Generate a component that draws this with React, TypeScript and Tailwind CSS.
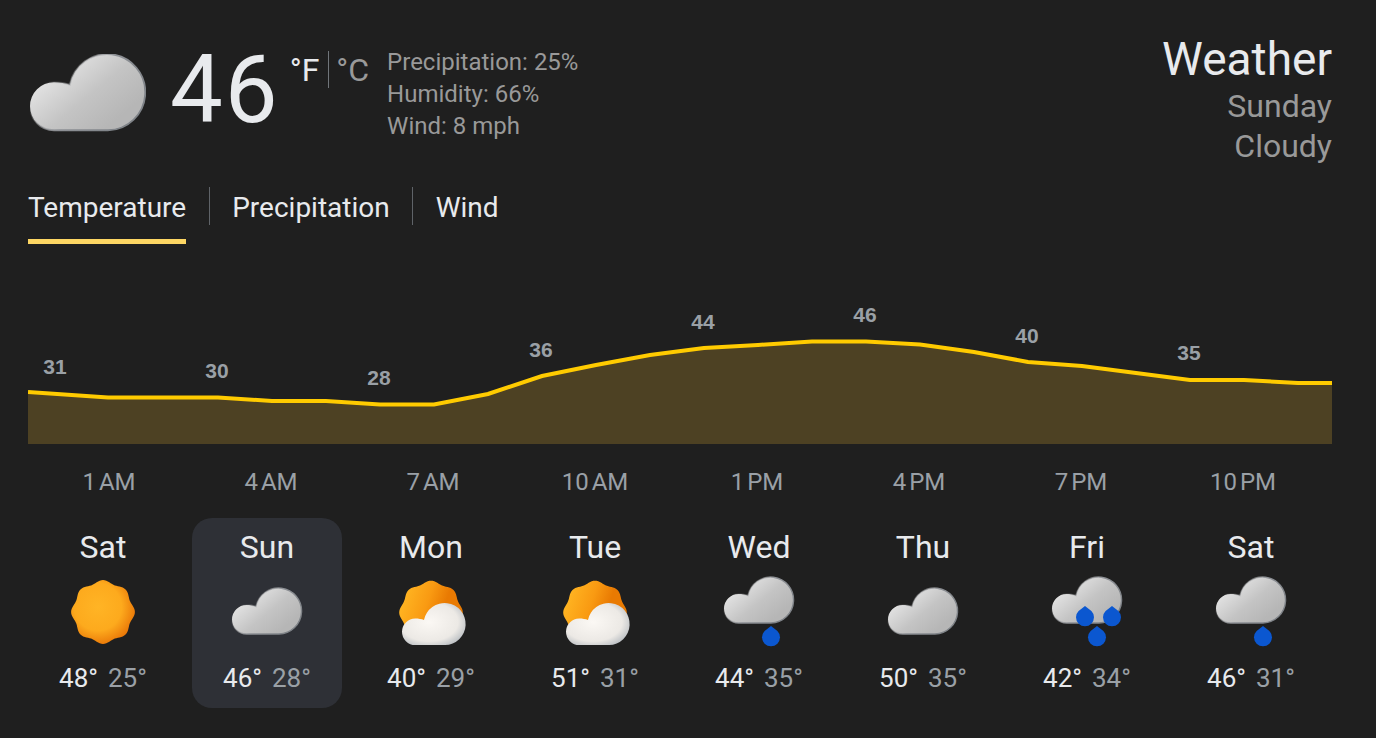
import React from "react";

const linePoints = [
  [0, 122], [80, 127.5], [190, 127.5], [244, 131], [298, 131], [352, 134.5], [406, 134.5], [460, 124], [514, 106],
  [568, 95], [622, 85], [676, 78], [730, 75], [784, 71.5], [838, 71.5], [892, 74.5], [946, 82], [1000, 92],
  [1054, 96], [1108, 103], [1162, 110], [1216, 110], [1270, 113], [1304, 113],
];

const chartLabels = [
  { x: 27, y: 104, v: "31" },
  { x: 189, y: 108, v: "30" },
  { x: 351, y: 115, v: "28" },
  { x: 513, y: 87, v: "36" },
  { x: 675, y: 59, v: "44" },
  { x: 837, y: 52, v: "46" },
  { x: 999, y: 73, v: "40" },
  { x: 1161, y: 90, v: "35" },
];

const hours = ["1 AM", "4 AM", "7 AM", "10 AM", "1 PM", "4 PM", "7 PM", "10 PM"];

const days = [
  { name: "Sat", icon: "sun", hi: "48°", lo: "25°" },
  { name: "Sun", icon: "cloud", hi: "46°", lo: "28°", active: true },
  { name: "Mon", icon: "partly", hi: "40°", lo: "29°" },
  { name: "Tue", icon: "partly", hi: "51°", lo: "31°" },
  { name: "Wed", icon: "rain", hi: "44°", lo: "35°" },
  { name: "Thu", icon: "cloud", hi: "50°", lo: "35°" },
  { name: "Fri", icon: "showers", hi: "42°", lo: "34°" },
  { name: "Sat", icon: "rain", hi: "46°", lo: "31°" },
];

const CLOUD = "M14.5 46A14.5 14.5 0 0 1 14.5 17C18 17 21.5 17.6 24 18.5A23 23 0 1 1 47 46Z";
const DROP = "M9 0L15.4 5A9 9 0 1 1 2.6 5Z";

// eight soft bumps round a circle
function sunPath(cx: number, cy: number, r: number, amp: number) {
  const pts: string[] = [];
  for (let i = 0; i < 120; i++) {
    const t = (i / 120) * Math.PI * 2;
    const rad = r + amp * Math.cos(8 * t);
    pts.push(`${(cx + rad * Math.sin(t)).toFixed(2)} ${(cy - rad * Math.cos(t)).toFixed(2)}`);
  }
  return "M" + pts.join("L") + "Z";
}

const Defs = () => (
  <svg width="0" height="0" className="absolute">
    <defs>
      <linearGradient id="grey" x1="0.05" y1="0.2" x2="0.8" y2="0.8">
        <stop offset="0" stopColor="#ececec" />
        <stop offset="0.6" stopColor="#c4c4c4" />
        <stop offset="1" stopColor="#b6b6b6" />
      </linearGradient>
      <linearGradient id="greyEdge" x1="0" y1="0" x2="1" y2="0.5">
        <stop offset="0.25" stopColor="#c4c4c4" stopOpacity="0" />
        <stop offset="0.6" stopColor="#8d9095" />
        <stop offset="1" stopColor="#7f8388" />
      </linearGradient>
      <radialGradient id="white" cx="0.42" cy="0.45" r="0.64">
        <stop offset="0" stopColor="#fbf8f4" />
        <stop offset="0.72" stopColor="#ece9e5" />
        <stop offset="1" stopColor="#bcc0c4" />
      </radialGradient>
      <radialGradient id="sunFill" cx="0.42" cy="0.42" r="0.62">
        <stop offset="0" stopColor="#ffb425" />
        <stop offset="0.6" stopColor="#fdaa1d" />
        <stop offset="1" stopColor="#e87406" />
      </radialGradient>
      <linearGradient id="sunBehind" x1="0.1" y1="0.25" x2="0.85" y2="0.5">
        <stop offset="0" stopColor="#ffb220" />
        <stop offset="0.45" stopColor="#f99a12" />
        <stop offset="0.8" stopColor="#e97a02" />
      </linearGradient>
    </defs>
  </svg>
);

const Cloud = ({ x, y, scale = 1 }: { x: number; y: number; scale?: number }) => (
  <g transform={`translate(${x} ${y}) scale(${scale})`}>
    <path d={CLOUD} fill="url(#grey)" />
    <path d={CLOUD} fill="none" stroke="url(#greyEdge)" strokeWidth="1.4" />
  </g>
);

const Drop = ({ x, y }: { x: number; y: number }) => (
  <path d={DROP} transform={`translate(${x} ${y})`} fill="#0b57d0" />
);

const WeatherIcon = ({ kind }: { kind: string }) => (
  <svg width="76" height="72" viewBox="0 0 76 72">
    {kind === "sun" && <path d={sunPath(38, 36, 30.5, 1.4)} fill="url(#sunFill)" />}
    {kind === "cloud" && <Cloud x={3} y={12} />}
    {kind === "partly" && (
      <>
        <path d={sunPath(38, 36.5, 30.5, 1.3)} fill="url(#sunBehind)" />
        <g transform="translate(9 27) scale(0.915)">
          <path d={CLOUD} fill="url(#white)" />
        </g>
      </>
    )}
    {kind === "rain" && (
      <>
        <Cloud x={3} y={1} />
        <Drop x={41} y={50} />
      </>
    )}
    {kind === "showers" && (
      <>
        <Cloud x={3} y={1} />
        <Drop x={27} y={30} />
        <Drop x={54} y={30} />
        <Drop x={39} y={50} />
      </>
    )}
  </svg>
);

export default function App() {
  const line = linePoints.map((p) => p.join(",")).join(" ");
  return (
    <div className="w-[1376px] h-[738px] overflow-hidden bg-[#1f1f1f] pl-[28px] pr-[44px] font-['Roboto',sans-serif]">
      <Defs />
      <div className="flex h-[187px] pt-[32px]">
        {/* big icon + current temp */}
        <svg width="116" height="78" viewBox="0 0 70 47" className="ml-[2px] mt-[22px] shrink-0">
          <path d={CLOUD} fill="url(#grey)" />
          <path d={CLOUD} fill="none" stroke="url(#greyEdge)" strokeWidth="1.1" />
        </svg>
        <div className="ml-[24px] text-[94px] leading-[110px] tracking-[2px] text-[#e8eaed] h-[110px] mt-[3px]">46</div>
        <div className="ml-[10px] flex items-start mt-[19px] text-[32px] leading-[38px]">
          <span className="text-[#e8eaed]">°F</span>
          <span className="ml-[9px] mr-[7px] w-px h-[37px] bg-[#70757a]" />
          <span className="text-[#999999]">°C</span>
        </div>
        <div className="ml-[18px] mt-[14px] text-[24px] leading-[32px] text-[#999999]">
          <div>Precipitation: 25%</div>
          <div>Humidity: 66%</div>
          <div>Wind: 8 mph</div>
        </div>
        <div className="ml-auto pt-[1px] text-right text-[#999999] text-[32px] leading-[40px]">
          <div className="text-[46px] leading-[53px] text-[#e8eaed]">Weather</div>
          <div>Sunday</div>
          <div>Cloudy</div>
        </div>
      </div>

      {/* tabs */}
      <div className="flex items-start h-[57px] text-[28px] text-[#e8eaed]">
        <div className="h-[57px] border-b-[5px] border-[#fdd663] pt-[4px] leading-[34px]">Temperature</div>
        <span className="ml-[23px] mr-[22px] w-px h-[38px] bg-[#5f6368]" />
        <div className="pt-[4px] leading-[34px]">Precipitation</div>
        <span className="ml-[22px] mr-[23px] w-px h-[38px] bg-[#5f6368]" />
        <div className="pt-[4px] leading-[34px]">Wind</div>
      </div>

      {/* chart */}
      <svg width="1304" height="174" viewBox="0 0 1304 174" className="block mt-[26px]">
        <polygon points={`${line} 1304,174 0,174`} fill="#4d4123" />
        <polyline points={line} fill="none" stroke="#ffcb00" strokeWidth="4" />
        {chartLabels.map((l) => (
          <text key={l.x} x={l.x} y={l.y} textAnchor="middle" fill="#9aa0a6" className="font-['Liberation_Sans',sans-serif] font-bold text-[21px]">
            {l.v}
          </text>
        ))}
      </svg>

      <div className="grid grid-cols-8 w-[1296px] mt-[22px] h-[32px] text-[24px] leading-[32px] text-[#9aa0a6] text-center [word-spacing:-3px]">
        {hours.map((h) => (
          <div key={h}>{h}</div>
        ))}
      </div>

      <div className="grid grid-cols-8 gap-x-[14px] w-[1298px] mt-[20px]">
        {days.map((d, i) => (
          <div key={i} className={`h-[190px] rounded-[20px] flex flex-col items-center ${d.active ? "bg-[#2e3036]" : ""}`}>
            <div className="mt-[10px] text-[32px] leading-[38px] text-[#e8eaed]">{d.name}</div>
            <div className="mt-[10px] h-[72px]">
              <WeatherIcon kind={d.icon} />
            </div>
            <div className="mt-[15px] flex gap-[10px] text-[26px] leading-[30px]">
              <span className="text-[#e8eaed]">{d.hi}</span>
              <span className="text-[#9aa0a6]">{d.lo}</span>
            </div>
          </div>
        ))}
      </div>
    </div>
  );
}
